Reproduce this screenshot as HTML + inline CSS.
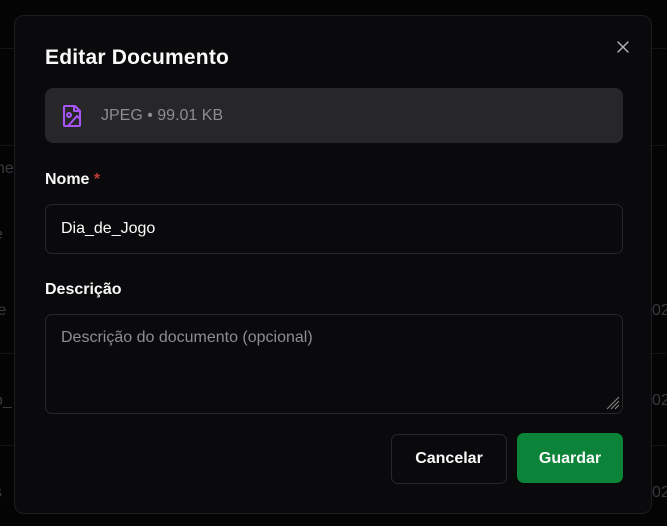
<!DOCTYPE html>
<html><head><style>
*{box-sizing:border-box;margin:0;padding:0}
body{width:667px;height:526px;background:#040405;font-family:"Liberation Sans",sans-serif;position:relative;overflow:hidden;color:#fafafa}
.line{position:absolute;left:0;right:0;height:1px;background:#141416}
.ghost{position:absolute;color:#3a3a3e;font-size:16px}
.dlg{position:absolute;left:14px;top:15px;width:638px;height:499px;background:#0a0a0c;border:1px solid #1e1e22;border-radius:10px}
.abs{position:absolute}
.btn{position:absolute;display:flex;align-items:center;justify-content:center;font-size:16px;font-weight:bold;line-height:1}
</style></head><body>
<div class="line" style="top:48px"></div>
<div class="line" style="top:145px"></div>
<div class="line" style="top:353px"></div>
<div class="line" style="top:445px"></div>
<div class="ghost" style="left:-4px;top:160px">ne</div>
<div class="ghost" style="left:-6px;top:226px">e</div>
<div class="ghost" style="left:-6px;top:302px">le</div>
<div class="ghost" style="left:-6px;top:392px">o_</div>
<div class="ghost" style="left:-6px;top:484px">s</div>
<div class="ghost" style="left:652px;top:302px">02</div>
<div class="ghost" style="left:652px;top:392px">02</div>
<div class="ghost" style="left:652px;top:484px">02</div>
<div class="dlg">
<div class="abs" style="left:30px;top:30px;font-size:21px;font-weight:bold;letter-spacing:0.2px">Editar Documento</div>
<svg class="abs" style="left:600px;top:23px" width="16" height="16" viewBox="0 0 16 16"><path d="M3 3L13 13M13 3L3 13" stroke="#b0b0b4" stroke-width="1.5" stroke-linecap="round"/></svg>
<div class="abs" style="left:30px;top:72px;width:578px;height:55px;background:#27272a;border-radius:8px"></div>
<svg class="abs" style="left:47px;top:88px" width="22" height="24" viewBox="0 0 22 24" fill="none" stroke="#a855f7" stroke-width="2" stroke-linejoin="round" stroke-linecap="round"><path d="M3 2h10l5 5v14a1 1 0 0 1-1 1H3a1 1 0 0 1-1-1V3a1 1 0 0 1 1-1z"/><path d="M12 2v5h6"/><circle cx="7" cy="11" r="2"/><path d="M18 15l-3-3-9 10"/></svg>
<div class="abs" style="left:86px;top:91px;font-size:16px;color:#8d8d92">JPEG • 99.01 KB</div>
<div class="abs" style="left:30px;top:155px;font-size:16px;font-weight:bold">Nome <span style="color:#c03a3a">*</span></div>
<div class="abs" style="left:30px;top:188px;width:578px;height:50px;border:1px solid #27272a;border-radius:7px"></div>
<div class="abs" style="left:46px;top:204px;font-size:16px">Dia_de_Jogo</div>
<div class="abs" style="left:30px;top:265px;font-size:16px;font-weight:bold">Descrição</div>
<div class="abs" style="left:30px;top:298px;width:578px;height:100px;border:1px solid #27272a;border-radius:7px"></div>
<div class="abs" style="left:46px;top:313px;font-size:16px;color:#8d8d92">Descrição do documento (opcional)</div>
<svg class="abs" style="left:591px;top:380px" width="14" height="14" viewBox="0 0 14 14" stroke="#888" stroke-width="1"><path d="M13 1L1 13M13 5L5 13M13 9L9 13"/></svg>
<div class="btn" style="left:376px;top:418px;width:116px;height:50px;border:1px solid #27272a;border-radius:7px">Cancelar</div>
<div class="btn" style="left:502px;top:417px;width:106px;height:50px;background:#0b8338;border-radius:7px;padding-top:2px">Guardar</div>
</div>
</body></html>
